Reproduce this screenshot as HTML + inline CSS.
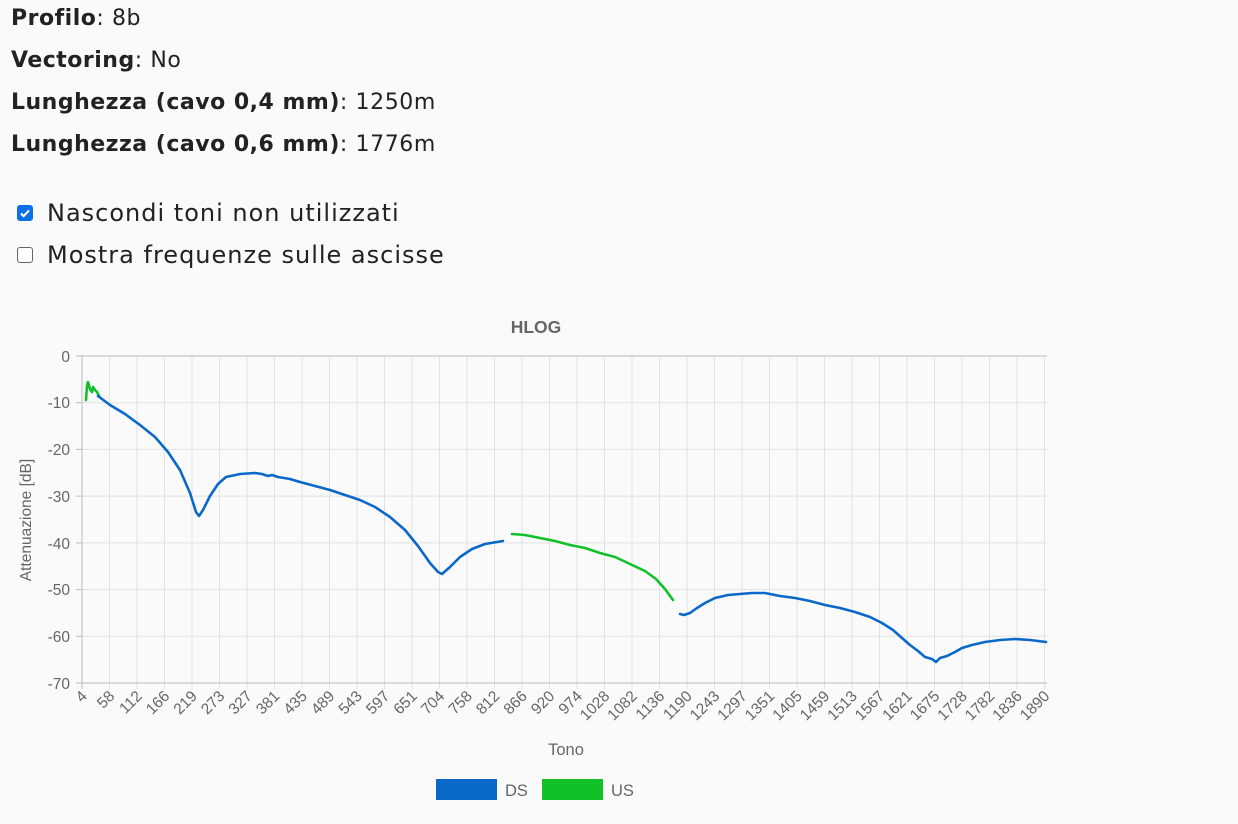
<!DOCTYPE html>
<html><head><meta charset="utf-8"><style>
body{margin:0;background:#fafafa;font-family:"DejaVu Sans",sans-serif;color:#222;width:1238px;height:824px;overflow:hidden;position:relative}
.l{position:absolute;left:11px;font-size:22px;line-height:30px;letter-spacing:0.6px}
.l b{font-weight:bold;letter-spacing:0.5px}
.cb{position:absolute;left:12px;font-size:24px;line-height:30px;letter-spacing:1px}
.box{display:inline-block;width:14px;height:14px;border:1px solid #666;border-radius:3px;vertical-align:0px;margin:0 14px 0 5px;background:#fff;position:relative}
.box.on{background:#0b6fe6;border-color:#0b6fe6}
.box svg{position:absolute;left:0;top:0}
svg.c{position:absolute;left:0;top:0}
</style></head><body>
<div class="l" style="top:4px"><b>Profilo</b>: 8b</div>
<div class="l" style="top:46px"><b>Vectoring</b>: No</div>
<div class="l" style="top:88px"><b>Lunghezza (cavo 0,4 mm)</b>: 1250m</div>
<div class="l" style="top:130px"><b>Lunghezza (cavo 0,6 mm)</b>: 1776m</div>
<div class="cb" style="top:198px"><span class="box on"><svg width="14" height="14" viewBox="0 0 14 14"><path d="M3 7.5l2.6 2.6L11 4.5" stroke="#fff" stroke-width="2.2" fill="none"/></svg></span>Nascondi toni non utilizzati</div>
<div class="cb" style="top:240px"><span class="box"></span>Mostra frequenze sulle ascisse</div>
<svg class="c" width="1238" height="824" font-family="Liberation Sans, sans-serif">
<g id="grid" stroke="#e2e2e2" stroke-width="1"></g>
<g stroke="#e2e2e2">
<line x1="82" y1="402.7" x2="1047" y2="402.7"/><line x1="82" y1="449.4" x2="1047" y2="449.4"/><line x1="82" y1="496.1" x2="1047" y2="496.1"/><line x1="82" y1="542.9" x2="1047" y2="542.9"/><line x1="82" y1="589.6" x2="1047" y2="589.6"/><line x1="82" y1="636.3" x2="1047" y2="636.3"/>
</g>
<g stroke="#bbb"><line x1="76" y1="356" x2="1047" y2="356"/><line x1="76" y1="683" x2="1047" y2="683"/><line x1="82" y1="356" x2="82" y2="689"/>
<line x1="76" y1="402.7" x2="82" y2="402.7"/><line x1="76" y1="449.4" x2="82" y2="449.4"/><line x1="76" y1="496.1" x2="82" y2="496.1"/><line x1="76" y1="542.9" x2="82" y2="542.9"/><line x1="76" y1="589.6" x2="82" y2="589.6"/><line x1="76" y1="636.3" x2="82" y2="636.3"/></g>
<g fill="#666" font-size="15.5" text-anchor="end">
<text x="70" y="362">0</text><text x="70" y="408">-10</text><text x="70" y="455">-20</text><text x="70" y="502">-30</text><text x="70" y="549">-40</text><text x="70" y="595">-50</text><text x="70" y="642">-60</text><text x="70" y="689">-70</text>
</g>
<g id="xl" fill="#666" font-size="15.5" text-anchor="end"></g>
<text transform="translate(31,520) rotate(-90)" fill="#666" font-size="15.5" text-anchor="middle">Attenuazione [dB]</text>
<text x="566" y="755" fill="#666" font-size="16.5" text-anchor="middle">Tono</text>
<text x="536" y="333" fill="#666" font-size="17.5" font-weight="bold" text-anchor="middle">HLOG</text>
<g fill="none" stroke-width="2.6" stroke-linejoin="round" stroke-linecap="round">
<path stroke="#12c12a" d="M86 400 L87 386 L88 382 L90 389 L92 392 L93 387 L95 390 L97 392 L99 396"/>
<path stroke="#0a68c8" d="M98 396 L110 405 L125 414 L140 425 L155 437 L168 452 L180 470 L190 493 L196 512 L199 516 L203 510 L210 496 L218 484 L226 477 L240 474 L255 473 L262 474 L268 476 L272 475 L278 477 L290 479 L300 482 L315 486 L330 490 L345 495 L360 500 L375 507 L390 517 L405 530 L418 546 L430 563 L438 572 L442 574 L450 567 L460 557 L472 549 L485 544 L503 541"/>
<path stroke="#12c12a" d="M512 534 L525 535 L540 538 L555 541 L570 545 L585 548 L600 553 L615 557 L630 564 L645 571 L656 579 L665 589 L673 600"/>
<path stroke="#0a68c8" d="M680 614 L684 615 L690 613 L697 608 L705 603 L715 598 L728 595 L740 594 L752 593 L765 593 L780 596 L795 598 L810 601 L825 605 L840 608 L855 612 L870 617 L882 623 L893 630 L902 638 L910 645 L918 651 L925 657 L932 659 L936 662 L940 658 L947 656 L955 652 L962 648 L972 645 L985 642 L1000 640 L1015 639 L1030 640 L1046 642"/>
</g>
<rect x="436" y="779" width="61" height="21" fill="#0a68c8"/><text x="505" y="796" fill="#666" font-size="16.5">DS</text>
<rect x="542" y="779" width="61" height="21" fill="#12c12a"/><text x="611" y="796" fill="#666" font-size="16.5">US</text>
</svg>
<script>
var L=[4,58,112,166,219,273,327,381,435,489,543,597,651,704,758,812,866,920,974,1028,1082,1136,1190,1243,1297,1351,1405,1459,1513,1567,1621,1675,1728,1782,1836,1890];
var g=document.getElementById('grid'),xl=document.getElementById('xl'),ns='http://www.w3.org/2000/svg';
L.forEach(function(v,i){var x=82+i*27.5;
var ln=document.createElementNS(ns,'line');ln.setAttribute('x1',x);ln.setAttribute('x2',x);ln.setAttribute('y1',356);ln.setAttribute('y2',689);ln.setAttribute('stroke',i==0?'#bbb':'#e2e2e2');g.appendChild(ln);
var t=document.createElementNS(ns,'text');t.setAttribute('transform','translate('+(x+6)+',697) rotate(-45)');t.textContent=v;xl.appendChild(t);});
</script>
</body></html>
